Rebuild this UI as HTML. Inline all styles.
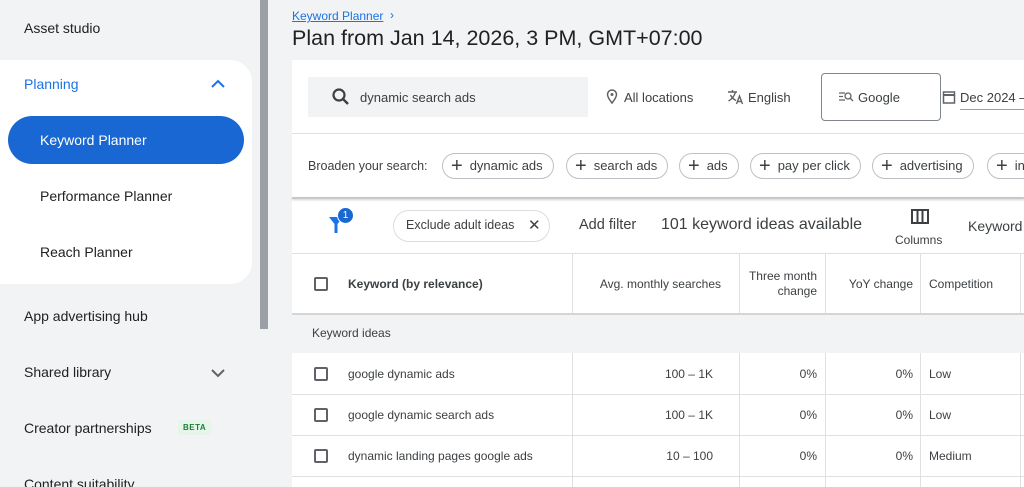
<!DOCTYPE html>
<html><head><style>
*{margin:0;padding:0;box-sizing:border-box}
html,body{width:1024px;height:487px;overflow:hidden}
body{background:#f1f3f4;font-family:"Liberation Sans",Arial,sans-serif;color:#3c4043;position:relative}
.a{position:absolute;white-space:nowrap}
.nav{font-size:14px;color:#202124}
.chip{position:absolute;top:153px;height:26px;border:1px solid #bdc1c6;border-radius:13px;font-size:13px;color:#3c4043;padding:0 10px 0 8px;line-height:24px;background:#fff}
.chip b{font-weight:normal;font-size:20px;margin-right:7px;vertical-align:-2px;color:#3c4043}
.cb{position:absolute;width:14px;height:14px;border:2px solid #5f6368;border-radius:2px}
.vl{position:absolute;width:1px;background:#e0e0e0}
.hl{position:absolute;left:292px;right:0;height:1px;background:#e0e0e0}
.t{position:absolute;font-size:12px;color:#3c4043;white-space:nowrap}
.r{text-align:right}
</style></head><body>
<div class="a nav" style="left:24px;top:20px">Asset studio</div>
<div class="a" style="left:0;top:60px;width:252px;height:224px;background:#fff;border-radius:0 22px 22px 0"></div>
<div class="a" style="left:24px;top:76px;font-size:14px;color:#1a73e8">Planning</div>
<svg class="a" style="left:210px;top:78px" width="16" height="12"><path d="M2 9 L8 3 L14 9" stroke="#1a73e8" stroke-width="2" fill="none"/></svg>
<div class="a" style="left:8px;top:116px;width:236px;height:48px;background:#1967d2;border-radius:24px"></div>
<div class="a" style="left:40px;top:132px;font-size:14px;color:#fff">Keyword Planner</div>
<div class="a nav" style="left:40px;top:188px">Performance Planner</div>
<div class="a nav" style="left:40px;top:244px">Reach Planner</div>
<div class="a nav" style="left:24px;top:308px">App advertising hub</div>
<div class="a nav" style="left:24px;top:364px">Shared library</div>
<svg class="a" style="left:210px;top:367px" width="16" height="12"><path d="M2 3 L8 9 L14 3" stroke="#5f6368" stroke-width="2" fill="none"/></svg>
<div class="a nav" style="left:24px;top:420px">Creator partnerships</div>
<div class="a" style="left:178px;top:420px;background:#e6f4ea;color:#188038;font-size:8px;padding:3px 5px;border-radius:3px;font-weight:bold;letter-spacing:.5px">BETA</div>
<div class="a nav" style="left:24px;top:476px">Content suitability</div>
<div class="a" style="left:260px;top:0;width:8px;height:329px;background:#9aa0a6"></div>
<div class="a" style="left:292px;top:9px;font-size:12px;color:#1a73e8;text-decoration:underline">Keyword Planner</div>
<div class="a" style="left:390px;top:8px;font-size:12px;color:#1a73e8">›</div>
<div class="a" style="left:292px;top:26px;font-size:21.5px;color:#202124">Plan from Jan 14, 2026, 3 PM, GMT+07:00</div>
<div class="a" style="left:292px;top:60px;right:0;bottom:0;background:#fff"></div>
<div class="a" style="left:308px;top:77px;width:280px;height:40px;background:#f1f3f4"></div>
<svg class="a" style="left:331px;top:87px" width="20" height="20"><circle cx="8" cy="8" r="5.5" stroke="#3c4043" stroke-width="2.2" fill="none"/><path d="M12 12 L17 17" stroke="#3c4043" stroke-width="2.4"/></svg>
<div class="t" style="left:360px;top:90px;font-size:13px">dynamic search ads</div>
<svg class="a" style="left:606px;top:89px" width="12" height="16"><path d="M6 14 C2 9 1.5 7 1.5 5.5 A4.5 4.5 0 0 1 10.5 5.5 C10.5 7 10 9 6 14Z" stroke="#5f6368" stroke-width="1.5" fill="none"/><circle cx="6" cy="5.5" r="1.5" fill="#5f6368"/></svg>
<div class="t" style="left:624px;top:90px;font-size:13px">All locations</div>
<svg class="a" style="left:727px;top:89px" width="18" height="16"><path d="M1 3H10M5.5 1V3M8.5 3C7.5 7 5 10 1.5 12M3.5 6C5 9 7 10.5 9 11.5" stroke="#5f6368" stroke-width="1.4" fill="none"/><path d="M9.5 15L12.5 7L15.5 15M10.5 12.5H14.5" stroke="#5f6368" stroke-width="1.4" fill="none"/></svg>
<div class="t" style="left:748px;top:90px;font-size:13px">English</div>
<div class="a" style="left:821px;top:73px;width:120px;height:48px;border:1px solid #80868b;border-radius:4px"></div>
<svg class="a" style="left:838px;top:91px" width="16" height="12"><path d="M1 2H7M1 5.5H5M1 9H7" stroke="#5f6368" stroke-width="1.3"/><circle cx="10" cy="5" r="3" stroke="#5f6368" stroke-width="1.3" fill="none"/><path d="M12 7L15 10" stroke="#5f6368" stroke-width="1.3"/></svg>
<div class="t" style="left:858px;top:90px;font-size:13px">Google</div>
<svg class="a" style="left:942px;top:89px" width="14" height="16"><rect x="1.5" y="3" width="11" height="11" stroke="#5f6368" stroke-width="1.5" fill="none"/><path d="M1.5 6 H12.5" stroke="#5f6368" stroke-width="2"/></svg>
<div class="t" style="left:960px;top:90px;font-size:13px">Dec 2024 –</div>
<div class="a" style="left:960px;top:109px;width:64px;height:1px;background:#9aa0a6"></div>
<div class="hl" style="top:133px"></div>
<div class="t" style="left:308px;top:159px;font-size:12.5px">Broaden your search:</div>
<div class="chip" style="left:442px"><b>+</b>dynamic ads</div>
<div class="chip" style="left:566px"><b>+</b>search ads</div>
<div class="chip" style="left:679px"><b>+</b>ads</div>
<div class="chip" style="left:750px"><b>+</b>pay per click</div>
<div class="chip" style="left:872px"><b>+</b>advertising</div>
<div class="chip" style="left:987px"><b>+</b>in</div>
<div class="a" style="left:292px;top:197px;right:0;height:2px;background:#c8c8c8;box-shadow:0 1px 2px rgba(0,0,0,.2)"></div>
<svg class="a" style="left:328px;top:214px" width="16" height="20"><path d="M1 3 H15 L9.5 10 V19 H6.5 V10 Z" fill="#1a73e8"/></svg>
<div class="a" style="left:337px;top:207px;width:17px;height:17px;border-radius:50%;background:#1967d2;color:#fff;font-size:10px;text-align:center;line-height:15px;border:1.5px solid #fff">1</div>
<div class="a" style="left:393px;top:210px;width:157px;height:32px;border:1px solid #dadce0;border-radius:16px"></div>
<div class="t" style="left:406px;top:218px;font-size:12.5px">Exclude adult ideas</div>
<div class="t" style="left:528px;top:216px;font-size:15px">✕</div>
<div class="t" style="left:579px;top:217px;font-size:14.5px">Add filter</div>
<div class="t" style="left:661px;top:216px;font-size:16px">101 keyword ideas available</div>
<svg class="a" style="left:911px;top:209px" width="18" height="15"><rect x="1" y="1" width="16" height="13" stroke="#3c4043" stroke-width="2" fill="none"/><path d="M6.5 1V14M11.5 1V14" stroke="#3c4043" stroke-width="2"/></svg>
<div class="t" style="left:895px;top:233px;font-size:12px">Columns</div>
<div class="t" style="left:968px;top:218px;font-size:14px">Keyword</div>
<div class="hl" style="top:253px"></div>
<div class="a" style="left:292px;top:313px;right:0;height:40px;background:#f1f3f4;border-top:2px solid #d5d5d5"></div>
<div class="vl" style="left:572px;top:254px;height:59px"></div>
<div class="vl" style="left:739px;top:254px;height:59px"></div>
<div class="vl" style="left:825px;top:254px;height:59px"></div>
<div class="vl" style="left:920px;top:254px;height:59px"></div>
<div class="vl" style="left:1020px;top:254px;height:59px"></div>
<div class="cb" style="left:314px;top:277px"></div>
<div class="t" style="left:348px;top:277px;font-weight:bold;color:#3c4043">Keyword (by relevance)</div>
<div class="t r" style="left:580px;width:141px;top:277px">Avg. monthly searches</div>
<div class="t r" style="left:740px;width:77px;top:269px;line-height:15px;white-space:normal">Three month change</div>
<div class="t r" style="left:826px;width:87px;top:277px">YoY change</div>
<div class="t" style="left:929px;top:277px">Competition</div>
<div class="t" style="left:312px;top:326px">Keyword ideas</div>
<div class="hl" style="top:394px"></div><div class="hl" style="top:435px"></div><div class="hl" style="top:476px"></div>
<div class="vl" style="left:572px;top:353px;height:134px"></div>
<div class="vl" style="left:739px;top:353px;height:134px"></div>
<div class="vl" style="left:825px;top:353px;height:134px"></div>
<div class="vl" style="left:920px;top:353px;height:134px"></div>
<div class="vl" style="left:1020px;top:353px;height:134px"></div>
<div class="cb" style="left:314px;top:367px"></div>
<div class="t" style="left:348px;top:367px">google dynamic ads</div>
<div class="t r" style="left:580px;width:133px;top:367px">100 – 1K</div>
<div class="t r" style="left:740px;width:77px;top:367px">0%</div>
<div class="t r" style="left:826px;width:87px;top:367px">0%</div>
<div class="t" style="left:929px;top:367px">Low</div>
<div class="cb" style="left:314px;top:408px"></div>
<div class="t" style="left:348px;top:408px">google dynamic search ads</div>
<div class="t r" style="left:580px;width:133px;top:408px">100 – 1K</div>
<div class="t r" style="left:740px;width:77px;top:408px">0%</div>
<div class="t r" style="left:826px;width:87px;top:408px">0%</div>
<div class="t" style="left:929px;top:408px">Low</div>
<div class="cb" style="left:314px;top:449px"></div>
<div class="t" style="left:348px;top:449px">dynamic landing pages google ads</div>
<div class="t r" style="left:580px;width:133px;top:449px">10 – 100</div>
<div class="t r" style="left:740px;width:77px;top:449px">0%</div>
<div class="t r" style="left:826px;width:87px;top:449px">0%</div>
<div class="t" style="left:929px;top:449px">Medium</div>
</body></html>
